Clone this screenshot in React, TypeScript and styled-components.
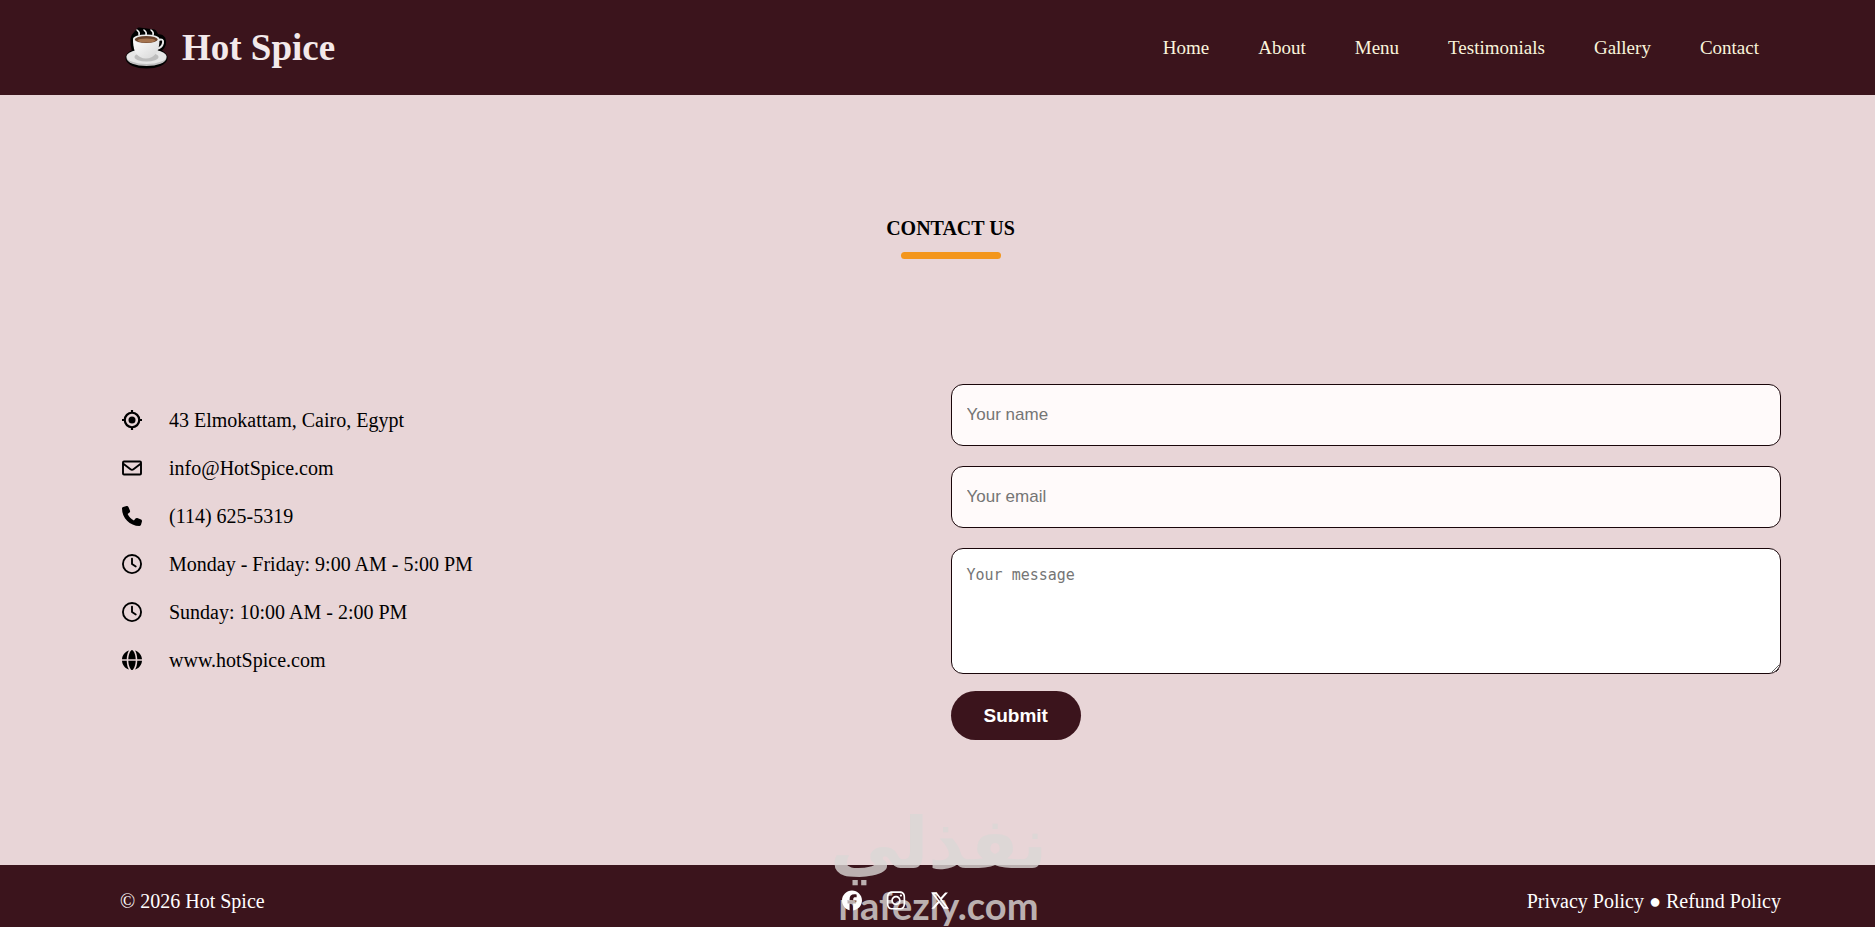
import React from "react";
import styled, { createGlobalStyle } from "styled-components";
import {
  FaFacebook,
  FaInstagram,
  FaPhone,
  FaRegClock,
  FaXTwitter,
} from "react-icons/fa6";

const colors = {
  wine: "#3b141c",
  blush: "#e8d5d7",
  orange: "#f3961c",
};

const GlobalStyle = createGlobalStyle`
  * { box-sizing: border-box; margin: 0; padding: 0; }
  html, body, #root { height: 100%; }
  body {
    font-family: "Liberation Serif", "Times New Roman", serif;
    font-size: 20px;
    background: ${colors.blush};
    color: #000;
  }
  a { color: inherit; text-decoration: none; }
  ul { list-style: none; }
`;

const Page = styled.div`
  min-height: 100%;
  display: flex;
  flex-direction: column;
`;

const Header = styled.header`
  display: flex;
  align-items: center;
  justify-content: space-between;
  height: 95px;
  padding: 0 116px 0 120px;
  background: ${colors.wine};
`;

const Brand = styled.a`
  display: flex;
  align-items: center;
  gap: 8px;
  color: #f3e9ea;
  font-size: 37px;
  font-weight: bold;
  line-height: 44px;
`;

const NavList = styled.ul`
  display: flex;
  gap: 49px;
  color: #faf4dc;
  font-size: 19px;
  line-height: 22px;
`;

const Section = styled.section`
  padding: 122px 94px 125px 120px;
`;

const Title = styled.h2`
  display: flex;
  flex-direction: column;
  align-items: center;
  gap: 12px;
  margin-bottom: 125px;
  font-size: 20px;
  line-height: 23px;

  &::after {
    content: "";
    width: 100px;
    height: 7px;
    border-radius: 4px;
    background: ${colors.orange};
  }
`;

const Columns = styled.div`
  display: grid;
  grid-template-columns: 1fr 1fr;
  align-items: start;
`;

const InfoList = styled.ul`
  display: grid;
  gap: 25px;
  padding-top: 25px;
`;

const InfoItem = styled.li`
  display: flex;
  align-items: flex-start;
  gap: 27px;
  padding-left: 2px;
  line-height: 23px;

  svg { width: 20px; height: 22px; }
`;

const Form = styled.form`
  display: flex;
  flex-direction: column;
  align-items: flex-start;
`;

const TextInput = styled.input`
  width: 100%;
  height: 62px;
  margin-bottom: 20px;
  padding: 0 15px;
  border: 1px solid #1a060a;
  border-radius: 12px;
  background: #fffafa;
  font: 17px "Liberation Sans", Arial, sans-serif;
  &::placeholder { color: #757575; }
`;

const MessageInput = styled.textarea`
  width: 100%;
  height: 126px;
  margin-bottom: 17px;
  padding: 16px 15px;
  border: 1px solid #1a060a;
  border-radius: 12px;
  background: #fff;
  font: 15px/20px "DejaVu Sans Mono", monospace;
  resize: vertical;
  &::placeholder { color: #757575; }
`;

const SubmitButton = styled.button`
  height: 49px;
  padding: 0 33px;
  border: 0;
  border-radius: 25px;
  background: ${colors.wine};
  color: #fff;
  font: bold 19px "Liberation Sans", Arial, sans-serif;
`;

const Footer = styled.footer`
  position: relative;
  flex: 1;
  display: flex;
  align-items: flex-start;
  justify-content: space-between;
  padding: 25px 94px 14px 120px;
  background: ${colors.wine};
  color: #fff;
  line-height: 23px;
`;

const Socials = styled.div`
  position: relative;
  z-index: 1;
  display: flex;
  gap: 24px;
  a { display: flex; }
  svg { height: 21px; }
`;

const Watermark = styled.div`
  position: absolute;
  top: -64px;
  left: 50%;
  width: 210px;
  margin-left: -104px;
  display: flex;
  flex-direction: column;
  align-items: center;
  color: rgb(219, 216, 214);
  opacity: 0.8;
  pointer-events: none;
`;

const WatermarkArabic = styled.span`
  font: bold 71px/86px "DejaVu Sans", sans-serif;
`;

const WatermarkLatin = styled.span`
  font: bold 38px/36px Lato, sans-serif;
`;

const CupIcon = () => (
  <svg width="54" height="46" viewBox="0 0 54 46" aria-hidden="true">
    <defs>
      <linearGradient id="cup" x1="0" x2="1" y1="0" y2="1">
        <stop offset="0" stopColor="#fff" />
        <stop offset="1" stopColor="#d6d6d6" />
      </linearGradient>
    </defs>
    <g fill="#000" stroke="#000" strokeWidth="5" strokeLinejoin="round">
      <ellipse cx="26.5" cy="33" rx="18.5" ry="8" />
      <path d="M13 14Q12 27 20 33H32Q38 31 40 24Q45 20 43 14Q41 11 37 12L34 7L19 5L14 11Z" />
    </g>
    <ellipse cx="26.5" cy="33" rx="20" ry="8" fill="#bfbfbf" />
    <ellipse cx="26.500" cy="31.500" rx="20" ry="7.500" fill="#e6e6e6" />
    <ellipse cx="26.500" cy="32" rx="12" ry="4.500" fill="#bdbdbd" />
    <path d="M38 15q6-2 5 3t-7 6" fill="none" stroke="#e8e8e8" strokeWidth="2" />
    <path d="M13 14C13 24 15 29 20 32Q26 35 32 32C37 29 39.500 24 39.500 14Z" fill="url(#cup)" />
    <ellipse cx="26.250" cy="14" rx="13.250" ry="4.500" fill="#ececec" />
    <ellipse cx="26.250" cy="14.500" rx="11.500" ry="3.500" fill="#68412b" />
    <ellipse cx="26.500" cy="15.500" rx="9" ry="2" fill="#a5744f" />
    <path d="M17 5q3 2 2 5m5-5q3 2 2 5m5-5q3 2 2 5" fill="none" stroke="#f4f4f4" strokeWidth="1.500" strokeLinecap="round" />
  </svg>
);

const LocationIcon = () => (
  <svg viewBox="0 0 20 20" aria-hidden="true">
    <circle cx="10" cy="10" r="7.250" fill="none" stroke="currentColor" strokeWidth="2.200" />
    <circle cx="10" cy="10" r="3.500" fill="currentColor" />
    <path d="M10 0v3M10 17v3M0 10h3M17 10h3" stroke="currentColor" strokeWidth="2.200" />
  </svg>
);

const EnvelopeIcon = () => (
  <svg viewBox="0 0 20 20" fill="none" stroke="currentColor" strokeWidth="1.900" aria-hidden="true">
    <rect x="1" y="3.500" width="18" height="13" rx="1" />
    <path d="M1 5.500l7.500 5.700q1.500 1 3 0L19 5.500" />
  </svg>
);

const GlobeIcon = () => (
  <svg viewBox="0 0 512 512" fill="currentColor" aria-hidden="true">
    <path d="M161 238h190c-3-65-17-130-37-173C294 21 272 0 256 0s-38 21-58 65c-20 43-34 108-37 173zM161 274h190c-3 65-17 130-37 173-20 44-42 65-58 65s-38-21-58-65c-20-43-34-108-37-173z" />
    <path d="M121 238C124 140 145 59 180 12 79 43 6 128 0 238zM391 238C388 140 367 59 332 12 433 43 506 128 512 238zM121 274C124 372 145 453 180 500 79 469 6 384 0 274zM391 274C388 372 367 453 332 500 433 469 506 384 512 274z" />
  </svg>
);

const links = ["Home", "About", "Menu", "Testimonials", "Gallery", "Contact"];

const details = [
  { icon: <LocationIcon />, text: "43 Elmokattam, Cairo, Egypt" },
  { icon: <EnvelopeIcon />, text: "info@HotSpice.com" },
  { icon: <FaPhone />, text: "(114) 625-5319" },
  { icon: <FaRegClock />, text: "Monday - Friday: 9:00 AM - 5:00 PM" },
  { icon: <FaRegClock />, text: "Sunday: 10:00 AM - 2:00 PM" },
  { icon: <GlobeIcon />, text: "www.hotSpice.com" },
];

export default function App() {
  return (
    <Page>
      <GlobalStyle />
      <Header>
        <Brand href="#home">
          <CupIcon />
          <span>Hot Spice</span>
        </Brand>
        <nav>
          <NavList>
            {links.map((name) => (
              <li key={name}>
                <a href={`#${name.toLowerCase()}`}>{name}</a>
              </li>
            ))}
          </NavList>
        </nav>
      </Header>
      <main>
        <Section id="contact">
          <Title>CONTACT US</Title>
          <Columns>
            <InfoList>
              {details.map(({ icon, text }) => (
                <InfoItem key={text}>
                  {icon}
                  <span>{text}</span>
                </InfoItem>
              ))}
            </InfoList>
            <Form onSubmit={(e) => e.preventDefault()}>
              <TextInput type="text" aria-label="Your name" placeholder="Your name" />
              <TextInput type="email" aria-label="Your email" placeholder="Your email" />
              <MessageInput aria-label="Your message" placeholder="Your message" />
              <SubmitButton type="submit">Submit</SubmitButton>
            </Form>
          </Columns>
        </Section>
      </main>
      <Footer>
        <Watermark>
          <WatermarkArabic lang="ar" dir="rtl">نفذلي</WatermarkArabic>
          <WatermarkLatin>nafezly.com</WatermarkLatin>
        </Watermark>
        <p>© 2026 Hot Spice</p>
        <Socials>
          <a href="#facebook" aria-label="Facebook"><FaFacebook /></a>
          <a href="#instagram" aria-label="Instagram"><FaInstagram /></a>
          <a href="#x" aria-label="X"><FaXTwitter /></a>
        </Socials>
        <p>
          <a href="#privacy">Privacy Policy</a> ● <a href="#refund">Refund Policy</a>
        </p>
      </Footer>
    </Page>
  );
}
